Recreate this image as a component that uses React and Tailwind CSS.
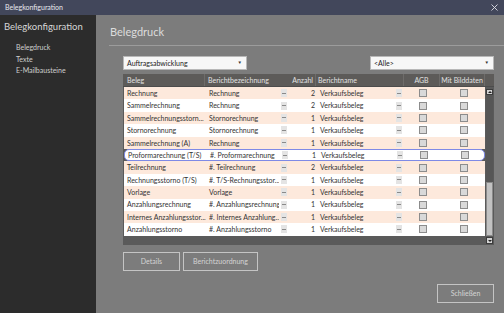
import React from 'react';

const rows = [
  ['Rechnung', 'Rechnung', '2'],
  ['Sammelrechnung', 'Rechnung', '2'],
  ['Sammelrechnungsstorn...', 'Stornorechnung', '1'],
  ['Stornorechnung', 'Stornorechnung', '1'],
  ['Sammelrechnung (A)', 'Rechnung', '1'],
  ['Proformarechnung (T/S)', '#. Proformarechnung', '1'],
  ['Teilrechnung', '#. Teilrechnung', '2'],
  ['Rechnungsstorno (T/S)', '#. T/S-Rechnungsstor...', '1'],
  ['Vorlage', 'Vorlage', '1'],
  ['Anzahlungsrechnung', '#. Anzahlungsrechnung', '1'],
  ['Internes Anzahlungsstor...', '#. Internes Anzahlung...', '1'],
  ['Anzahlungsstorno', '#. Anzahlungsstorno', '1'],
];

function Dash({ className }) {
  return (
    <div className={`h-[8px] w-[6px] bg-[#e4e4e4] flex items-center justify-center ${className}`}>
      <div className="h-px w-[4px] bg-[#8a8a8a]" />
    </div>
  );
}

function Check() {
  return <div className="h-[8px] w-[8px] border border-[#8c8c8c] bg-[#d9d9d9]" />;
}

function Select({ label }) {
  return (
    <div className="h-[14px] w-[124px] bg-[#f7f7f7] border border-[#b8b8b8] flex items-center justify-between pl-[3px] pr-[4px] text-[7px] text-[#222]">
      <span>{label}</span>
      <span className="text-[4.5px] text-[#333]">▼</span>
    </div>
  );
}

function Row({ r, i }) {
  const selected = i === 5;
  const bg = selected ? 'bg-white border border-[#7e8ae6] rounded-[5px]' : i % 2 === 0 ? 'bg-[#fde9dc]' : 'bg-white';
  return (
    <div className={`grid grid-cols-[82px_73px_14px_24px_76px_12px_36px_45px] h-[12.4px] items-center text-[7px] text-[#333] ${bg}`}>
      <div className="pl-[3px] whitespace-nowrap overflow-hidden">{r[0]}</div>
      <div className="pl-[3px] whitespace-nowrap overflow-hidden">{r[1]}</div>
      <div className="flex"><Dash className="ml-[2px]" /></div>
      <div className="text-right pr-[2px]">{r[2]}</div>
      <div className="pl-[3px]">Verkaufsbeleg</div>
      <div className="flex"><Dash className="ml-[3px]" /></div>
      <div className="flex justify-center"><Check /></div>
      <div className="flex justify-center"><Check /></div>
    </div>
  );
}

function Btn({ children, w }) {
  return (
    <div className={`h-[19px] ${w} border border-[#c4c4c4] flex items-center justify-center text-[7px] text-[#d4d4d4]`}>
      {children}
    </div>
  );
}

export default function App() {
  return (
    <div className="w-[504px] h-[313px] overflow-hidden flex flex-col" style={{ fontFamily: 'Lato, "Noto Sans", sans-serif' }}>
      {/* title bar */}
      <div className="h-[15px] bg-[#42475b] flex items-center justify-between px-[5px]">
        <span className="text-[7px] text-[#e8e8ee]">Belegkonfiguration</span>
        <svg width="7" height="7" viewBox="0 0 7 7" className="mr-[1px]">
          <path d="M0.5 0.5 L6.5 6.5 M6.5 0.5 L0.5 6.5" stroke="#e0e0e8" strokeWidth="0.9" />
        </svg>
      </div>

      <div className="flex flex-1">
        {/* sidebar */}
        <div className="w-[97px] bg-[#2c2c2c] flex flex-col">
          <div className="pl-[4px] pt-[5px] h-[22px] text-[9.5px] text-[#d6d6d6]">Belegkonfiguration</div>
          <div className="flex flex-col pl-[16px] pt-[5px] text-[7px] text-[#cfcfcf] leading-[11.5px]">
            <span>Belegdruck</span>
            <span>Texte</span>
            <span>E-Mailbausteine</span>
          </div>
        </div>

        {/* main */}
        <div className="flex-1 bg-[#7c7c7c] flex flex-col">
          <div className="pl-[14px] pt-[10px] h-[30px] text-[11px] leading-[14px] text-[#dcdcdc]">Belegdruck</div>
          <div className="ml-[13px] h-px bg-[#9c9c9c]" />

          <div className="pl-[27px] pr-[10px] flex flex-col">
            <div className="flex justify-between mt-[10px]">
              <Select label="Auftragsabwicklung" />
              <Select label="<Alle>" />
            </div>

            {/* table */}
            <div className="mt-[4px] w-[371px] bg-[#5a5a5a] flex flex-col">
              <div className="h-[13px] bg-[#5d5b59] grid grid-cols-[82px_87px_24px_88px_36px_45px_9px] items-center text-[7px] text-[#e2e2e2] border-b border-[#4c4c4c]">
                <div className="pl-[4px] border-r border-[#6e6c6a] h-full flex items-center">Beleg</div>
                <div className="pl-[3px] h-full flex items-center">Berichtbezeichnung</div>
                <div className="pr-[2px] border-r border-[#6e6c6a] h-full flex items-center justify-end whitespace-nowrap">Anzahl</div>
                <div className="pl-[2px] border-r border-[#6e6c6a] h-full flex items-center">Berichtname</div>
                <div className="border-r border-[#6e6c6a] h-full flex items-center justify-center">AGB</div>
                <div className="border-r border-[#6e6c6a] h-full flex items-center justify-center whitespace-nowrap">Mit Bilddaten</div>
                <div />
              </div>
              <div className="flex">
                <div className="w-[362px] pl-[1px] pb-[9px] flex flex-col">
                  {rows.map((r, i) => (
                    <Row key={i} r={r} i={i} />
                  ))}
                </div>
                {/* scrollbar */}
                <div className="w-[9px] flex flex-col items-center pt-[2px]">
                  <div className="h-[6px] w-[7px] bg-[#d4d4d4] border border-[#3c3c3c] flex items-center justify-center">
                    <div className="w-0 h-0 border-l-[2px] border-r-[2px] border-b-[2px] border-l-transparent border-r-transparent border-b-[#222]" />
                  </div>
                  <div className="h-[87px] w-[7px] bg-[#565656]" />
                  <div className="h-[54px] w-[7px] bg-[#c2c2c2] border border-[#8a8a8a]" />
                  <div className="h-[7px] w-[7px] mt-[1px] bg-[#d4d4d4] border border-[#3c3c3c] flex items-center justify-center">
                    <div className="w-0 h-0 border-l-[2px] border-r-[2px] border-t-[2px] border-l-transparent border-r-transparent border-t-[#222]" />
                  </div>
                </div>
              </div>
            </div>

            <div className="flex gap-[3px] mt-[7px]">
              <Btn w="w-[57px]">Details</Btn>
              <Btn w="w-[75px]">Berichtzuordnung</Btn>
            </div>

            <div className="flex justify-end mt-[13px]">
              <Btn w="w-[57px]">Schließen</Btn>
            </div>
          </div>
        </div>
      </div>
    </div>
  );
}
